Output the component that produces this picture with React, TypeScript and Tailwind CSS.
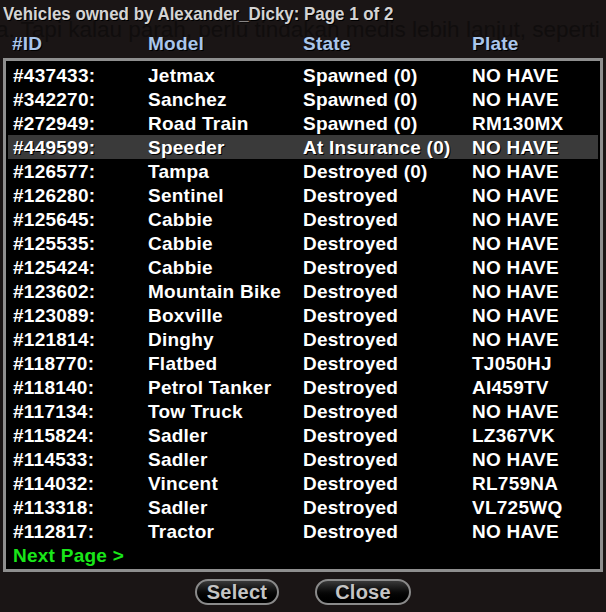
import React from "react";

const rows: [string, string, string, string][] = [
  ["#437433:", "Jetmax", "Spawned (0)", "NO HAVE"],
  ["#342270:", "Sanchez", "Spawned (0)", "NO HAVE"],
  ["#272949:", "Road Train", "Spawned (0)", "RM130MX"],
  ["#449599:", "Speeder", "At Insurance (0)", "NO HAVE"],
  ["#126577:", "Tampa", "Destroyed (0)", "NO HAVE"],
  ["#126280:", "Sentinel", "Destroyed", "NO HAVE"],
  ["#125645:", "Cabbie", "Destroyed", "NO HAVE"],
  ["#125535:", "Cabbie", "Destroyed", "NO HAVE"],
  ["#125424:", "Cabbie", "Destroyed", "NO HAVE"],
  ["#123602:", "Mountain Bike", "Destroyed", "NO HAVE"],
  ["#123089:", "Boxville", "Destroyed", "NO HAVE"],
  ["#121814:", "Dinghy", "Destroyed", "NO HAVE"],
  ["#118770:", "Flatbed", "Destroyed", "TJ050HJ"],
  ["#118140:", "Petrol Tanker", "Destroyed", "AI459TV"],
  ["#117134:", "Tow Truck", "Destroyed", "NO HAVE"],
  ["#115824:", "Sadler", "Destroyed", "LZ367VK"],
  ["#114533:", "Sadler", "Destroyed", "NO HAVE"],
  ["#114032:", "Vincent", "Destroyed", "RL759NA"],
  ["#113318:", "Sadler", "Destroyed", "VL725WQ"],
  ["#112817:", "Tractor", "Destroyed", "NO HAVE"],
];

function Row({ cells, selected }: { cells: string[]; selected?: boolean }) {
  return (
    <div
      className={`flex h-[24px] items-center ${selected ? "bg-[#3a3a3a]" : ""}`}
    >
      <div className="w-[140px] pl-[5px]">{cells[0]}</div>
      <div className="w-[155px]">{cells[1]}</div>
      <div className="w-[169px]">{cells[2]}</div>
      <div>{cells[3]}</div>
    </div>
  );
}

export default function App() {
  return (
    <div className="relative h-[612px] w-[606px] overflow-hidden bg-[#1a1515] text-white [font-family:'Liberation_Sans',Arial,sans-serif] font-bold text-[19px] leading-none tracking-[0.25px] [text-shadow:1px_1px_0_#000]">
      <div className="pointer-events-none absolute left-[-4px] top-[19px] whitespace-nowrap font-normal text-[22.5px] tracking-normal text-[#100d0d] [text-shadow:none]">
        a. Tapi kalau parah, perlu tindakan medis lebih lanjut, seperti
      </div>
      <div className="relative flex flex-col">
        <div className="h-[30px] pl-[3px] pt-[4px]">
          <div className="origin-left scale-x-[0.89] whitespace-nowrap text-[19px] tracking-normal text-[#d4d4d4]">
            Vehicles owned by Alexander_Dicky: Page 1 of 2
          </div>
        </div>
        <div className="flex h-[26px] items-center text-[#a9c6ec]">
          <div className="w-[148px] pl-[12px]">#ID</div>
          <div className="w-[155px]">Model</div>
          <div className="w-[169px]">State</div>
          <div>Plate</div>
        </div>
        <div className="mx-[3px] mt-[2px] h-[514px] border-[3px] border-[#8e8e8e] bg-black px-[2px] pt-[2px]">
          {rows.map((r, i) => (
            <Row key={i} cells={r} selected={i === 3} />
          ))}
          <div className="flex h-[24px] items-center pl-[5px] text-[#19e619]">
            Next Page &gt;
          </div>
        </div>
        <div className="mt-[7px] flex justify-center gap-[36px]">
          <button className="h-[26px] w-[84px] rounded-full border-2 border-[#8a8a8a] bg-gradient-to-b from-[#3a3a3a] via-[#0a0a0a] to-black text-[20px] text-[#c4c4c4] [text-shadow:1px_1px_0_#000]">
            Select
          </button>
          <button className="h-[26px] w-[96px] rounded-full border-2 border-[#8a8a8a] bg-gradient-to-b from-[#3a3a3a] via-[#0a0a0a] to-black text-[20px] text-[#c4c4c4] [text-shadow:1px_1px_0_#000]">
            Close
          </button>
        </div>
      </div>
    </div>
  );
}
